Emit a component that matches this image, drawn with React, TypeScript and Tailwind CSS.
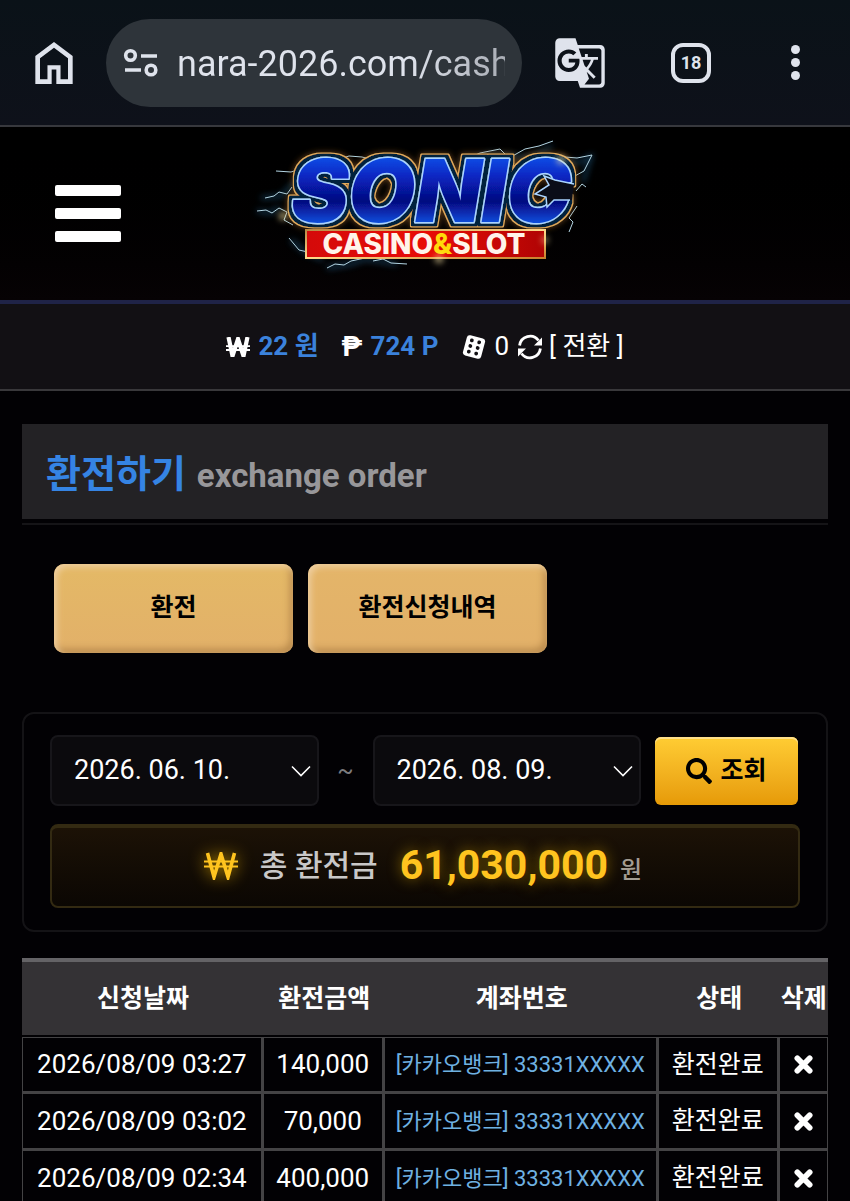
import React from "react";
import { FaSearch } from "react-icons/fa";
import { MdGTranslate } from "react-icons/md";

interface Exchange {
  date: string;
  amount: string;
  account: string;
  status: string;
}

const exchanges: Exchange[] = [
  {
    date: "2026/08/09 03:27",
    amount: "140,000",
    account: "[카카오뱅크] 33331XXXXX",
    status: "환전완료",
  },
  {
    date: "2026/08/09 03:02",
    amount: "70,000",
    account: "[카카오뱅크] 33331XXXXX",
    status: "환전완료",
  },
  {
    date: "2026/08/09 02:34",
    amount: "400,000",
    account: "[카카오뱅크] 33331XXXXX",
    status: "환전완료",
  },
];

const HomeIcon = () => (
  <svg viewBox="0 0 24 24" className="size-14" fill="currentColor">
    <path d="M6 19h3.200v-6h5.600v6h3.200v-9l-6-4.500L6 10v9zm-2 2V9l8-6 8 6v12h-7v-6.200h-2v6.200H4z" />
  </svg>
);

const SiteInfoIcon = () => (
  <svg
    viewBox="0 0 36 30"
    className="h-[30px] w-9 shrink-0"
    fill="none"
    stroke="currentColor"
    strokeWidth="3.6"
  >
    <circle cx="7.5" cy="7.5" r="4.8" />
    <path d="M18 8h16M2 22h16" />
    <circle cx="28" cy="22" r="4.8" />
  </svg>
);

const WonIcon = () => (
  <svg viewBox="0 0 24 20" className="h-5 w-6" fill="none" stroke="#fff">
    <path d="M2.500 0l4 19L12 2l5.500 17 4-19" strokeWidth="4.200" />
    <path d="M0 9.200h24M0 13h24" strokeWidth="1.800" />
  </svg>
);

const DiceIcon = () => (
  <svg viewBox="0 0 24 24" className="size-6" fill="#fff">
    <g transform="rotate(15 12 12)">
      <rect x="2.6" y="1.6" width="18.8" height="20.8" rx="3" />
      <g fill="#121014">
        <circle cx="8.2" cy="6.2" r="1.9" />
        <circle cx="15.8" cy="6.2" r="1.9" />
        <circle cx="8.2" cy="12" r="1.9" />
        <circle cx="15.8" cy="12" r="1.9" />
        <circle cx="8.2" cy="17.8" r="1.9" />
        <circle cx="15.8" cy="17.8" r="1.9" />
      </g>
    </g>
  </svg>
);

const RefreshIcon = () => (
  <svg viewBox="0 0 26 26" className="size-[26px]" fill="none" stroke="#fff">
    <path
      d="M2.600 11.500A10.500 10.500 0 0 1 21.500 6.500M23.400 14.500A10.500 10.500 0 0 1 4.500 19.500"
      strokeWidth="2.800"
    />
    <path d="M25 3.500v8h-8zM1 22.500v-8h8z" fill="#fff" stroke="none" />
  </svg>
);

const CloseIcon = () => (
  <svg viewBox="0 0 20 20" className="size-[19px]" stroke="#fff" strokeWidth="6">
    <path d="M3.500 3.500l13 13M16.500 3.500l-13 13" strokeLinecap="round" />
  </svg>
);

const Logo = () => (
  <svg
    viewBox="0 0 340 132"
    className="h-[132px] w-[340px] overflow-visible"
    role="img"
    aria-label="SONIC CASINO&SLOT"
  >
    <defs>
      <linearGradient id="blue" x1="0" y1="0" x2="0" y2="1">
        <stop offset="0.1" stopColor="#0d5cf5" />
        <stop offset="0.35" stopColor="#0828c4" />
        <stop offset="0.6" stopColor="#050880" />
        <stop offset="0.85" stopColor="#0f5cf0" />
      </linearGradient>
      <linearGradient id="gold" x1="0" y1="0" x2="1" y2="1">
        <stop offset="0" stopColor="#b98a46" />
        <stop offset="0.5" stopColor="#ffd98a" />
        <stop offset="1" stopColor="#c9802c" />
      </linearGradient>
      <linearGradient id="red" x1="0" y1="0" x2="1" y2="0">
        <stop offset="0" stopColor="#d40a0a" />
        <stop offset="0.5" stopColor="#e80c06" />
        <stop offset="1" stopColor="#b00404" />
      </linearGradient>
      <filter id="glow" x="-20%" y="-20%" width="140%" height="140%">
        <feGaussianBlur stdDeviation="3" />
      </filter>
      {/* dark band, gold rim and warm halo around the lettering */}
      <filter id="rim" x="-10%" y="-20%" width="120%" height="140%">
        <feMorphology in="SourceAlpha" operator="dilate" radius="4" result="outer" />
        <feMorphology in="SourceAlpha" operator="dilate" radius="2.5" result="inner" />
        <feGaussianBlur in="outer" stdDeviation="0.5" result="outerSoft" />
        <feGaussianBlur in="inner" stdDeviation="0.4" result="innerSoft" />
        <feGaussianBlur in="outer" stdDeviation="3" result="haloShape" />
        <feFlood floodColor="#a8692a" floodOpacity="0.6" />
        <feComposite in2="haloShape" operator="in" result="halo" />
        <feFlood floodColor="#e0ab5c" />
        <feComposite in2="outerSoft" operator="in" result="rim" />
        <feFlood floodColor="#06203c" />
        <feComposite in2="innerSoft" operator="in" result="band" />
        <feMerge>
          <feMergeNode in="halo" />
          <feMergeNode in="rim" />
          <feMergeNode in="band" />
          <feMergeNode in="SourceGraphic" />
        </feMerge>
      </filter>
    </defs>

    {/* lightning */}
    <g fill="none" stroke="#2b7fb5" strokeWidth="3" opacity="0.55" filter="url(#glow)">
      <path d="M2 63l14 2 8-6M6 50l20-2 14-14" />
      <path d="M36 92l14 12 18 8M72 120l24-4 14-5 32 5" />
      <path d="M205 15l30-9 22 2 18 2 22-12M298 14l28 0 10-6-8 26" />
    </g>
    <g fill="none" stroke="#b4d6e4" strokeWidth="1" strokeLinejoin="round">
      <path d="M2 63l9-1 6 3 7-5 8 4-3 8 9 5M10 50l9-2 5-4 8 2 5-7" />
      <path d="M21 23l15 1 12-4M78 13l16-5 13 1 12 3" />
      <path d="M34 90l10 12 13 3 3 6M72 120l8-4 9 1 7-4 14-3" />
      <path d="M118 113l10-2 8 4 16 1" />
      <path d="M205 14l20-9 20-4 9 9 16-9 14-3 14-5" />
      <path d="M294 12l16-3 12 1 15-3-8 16-11 6M321 43l6-7 4 3M322 58l-8 12 4 4-4 10" />
    </g>

    <text
      x="176"
      y="74"
      fontFamily="Inter, sans-serif"
      fontWeight="900"
      fontStyle="italic"
      fontSize="86"
      textAnchor="middle"
      fill="url(#blue)"
      stroke="#a9d4ff"
      strokeWidth="3"
      strokeLinejoin="round"
      paintOrder="stroke"
      filter="url(#rim)"
    >
      SONIC
    </text>
    {/* quills cut into the mouth of the last letter */}
    <path d="M319 36l-19-4-11-4 5 9-14 9 11 3 1 10 7-7h18z" fill="#0a0d18" />
    <path
      d="M319 36l-19-4-11-4 5 9-14 9 11 3 1 10 7-7h16"
      fill="none"
      stroke="#a9d4ff"
      strokeWidth="1.5"
    />

    <rect x="51" y="82" width="239" height="28" fill="url(#red)" stroke="url(#gold)" strokeWidth="2" />
    <text
      x="169"
      y="106"
      fontFamily="Inter, sans-serif"
      fontWeight="800"
      fontSize="28"
      textAnchor="middle"
      fill="#fff4ea"
    >
      CASINO<tspan fill="#ffd90a">&amp;</tspan>SLOT
    </text>
    <g fill="#ffe9a8" opacity="0.7" filter="url(#glow)">
      <circle cx="306" cy="12" r="4" />
      <circle cx="184" cy="111" r="4" />
      <circle cx="28" cy="68" r="4" />
      <circle cx="290" cy="92" r="3" />
    </g>
  </svg>
);

interface DateSelectProps {
  label: string;
  value: string;
}

const DateSelect = ({ label, value }: DateSelectProps) => (
  <div className="relative flex-1">
    <select
      aria-label={label}
      className="h-[71px] w-full appearance-none rounded-lg border-2 border-[#17161a] bg-[#0b0a0d] px-[22px] text-[27px] text-white"
    >
      <option>{value}</option>
    </select>
    <svg
      viewBox="0 0 20 12"
      className="pointer-events-none absolute top-[30px] right-2 h-3 w-5"
      fill="none"
      stroke="#fff"
      strokeWidth="1.6"
    >
      <path d="M1 1.500l9 9 9-9" />
    </svg>
  </div>
);

const BrowserBar = () => (
  <div className="flex h-[127px] items-center border-b-2 border-[#37383d] bg-linear-to-b from-[#0a1218] to-[#0e111a] pl-[26px] text-[#dfe3ec]">
    <button aria-label="홈">
      <HomeIcon />
    </button>
    <div className="ml-6 flex h-[88px] min-w-0 flex-1 items-center gap-[18px] rounded-full bg-[#2e343a] px-[17px]">
      <SiteInfoIcon />
      <input
        aria-label="주소"
        defaultValue="nara-2026.com/cash"
        className="h-14 w-full min-w-0 bg-linear-to-r from-[#dfe3ec] from-70% to-[#a9adb5] bg-clip-text pt-0.5 text-4xl text-transparent outline-none"
      />
    </div>
    <div className="ml-[31px] flex w-[297px] items-center">
      <button aria-label="번역">
        <MdGTranslate className="size-[54px]" />
      </button>
      <button className="ml-16 size-10 rounded-xl border-4 border-[#dfe3ec] text-lg leading-none font-bold">
        18
      </button>
      <button aria-label="메뉴" className="ml-20 flex flex-col gap-1">
        <span className="size-[9px] rounded-full bg-[#dfe3ec]" />
        <span className="size-[9px] rounded-full bg-[#dfe3ec]" />
        <span className="size-[9px] rounded-full bg-[#dfe3ec]" />
      </button>
    </div>
  </div>
);

const Header = () => (
  <header className="grid h-[177px] grid-cols-[1fr_auto_1fr] items-center border-b-4 border-[#1f2347] bg-linear-to-b from-black to-[#060204]">
    <button aria-label="메뉴 열기" className="ml-[55px] flex w-[66px] flex-col gap-3">
      <span className="h-[11px] w-full rounded-xs bg-white" />
      <span className="h-[11px] w-full rounded-xs bg-white" />
      <span className="h-[11px] w-full rounded-xs bg-white" />
    </button>
    <Logo />
  </header>
);

const Wallet = () => (
  <div className="flex h-[87px] items-center justify-center border-b-2 border-[#39383b] bg-[#121014] text-[26px]">
    <WonIcon />
    <span className="ml-2 font-bold text-[#3b82dc]">22 원</span>
    <span className="ml-[23px] text-[28px] font-bold">₱</span>
    <span className="ml-2 font-bold text-[#3b82dc]">724 P</span>
    <span className="ml-6">
      <DiceIcon />
    </span>
    <span className="mx-2">0</span>
    <RefreshIcon />
    <button className="ml-1.5">[ 전환 ]</button>
  </div>
);

const App = () => {
  return (
    <div className="h-screen overflow-hidden bg-[#020104] font-['Roboto','Noto_Sans_CJK_KR',sans-serif] text-white">
      <BrowserBar />
      <Header />
      <Wallet />
      <main className="px-[22px] pt-[33px]">
        <div className="border-b-2 border-[#151417] pb-1">
          <h1 className="flex h-[95px] items-baseline gap-[11px] bg-[#232225] px-6 pt-6 text-[38px] leading-[52px] font-bold text-[#3584e4]">
            환전하기
            <span className="text-[33px] text-[#98979a]">exchange order</span>
          </h1>
        </div>

        <div className="mt-[39px] ml-8 flex gap-[15px] text-[25px] font-bold text-black">
          <button className="h-[89px] w-[239px] rounded-[10px] bg-linear-to-b from-[#e4b966] to-[#e2b069] pb-0.5 shadow-[inset_3px_3px_6px_#efcfa0,inset_-3px_-4px_7px_#b98a4c]">
            환전
          </button>
          <button className="h-[89px] w-[239px] rounded-[10px] bg-linear-to-b from-[#e4b569] to-[#e2b069] pb-0.5 shadow-[inset_3px_3px_6px_#efcfa0,inset_-3px_-4px_7px_#b98a4c]">
            환전신청내역
          </button>
        </div>

        <section className="mt-[59px] rounded-xl border-2 border-[#141316] px-[26px] pt-[21px] pb-[22px]">
          <div className="flex items-center pr-0.5">
            <DateSelect label="시작일" value="2026. 06. 10." />
            <span className="w-[54px] text-center text-2xl text-[#7c7b7e]">~</span>
            <DateSelect label="종료일" value="2026. 08. 09." />
            <button className="ml-[14px] flex h-[68px] w-[143px] items-center justify-center gap-2 rounded-md bg-linear-to-b from-[#ffcd33] to-[#e69a06] text-[25px] font-bold text-black shadow-[inset_0_2px_0_#ffe08a]">
              <FaSearch className="size-[26px]" />
              조회
            </button>
          </div>
          <div className="mt-[18px] flex h-[84px] items-center justify-center rounded-lg border-2 border-t-4 border-[#332a12] bg-linear-to-b from-[#1c1206] to-[#0b0703] pr-1 pb-0.5">
            <svg
              viewBox="0 0 34 28"
              className="h-7 w-[34px] drop-shadow-[0_0_8px_#b88a00]"
              fill="none"
              stroke="#ffc41f"
            >
              <path d="M3.500 1l6.500 24L17 2l7 23L30.500 1" strokeWidth="3.600" />
              <path d="M0 9.500h34M0 14.500h34" strokeWidth="2" />
            </svg>
            <span className="ml-[22px] text-3xl font-medium text-[#c9c8c8]">총 환전금</span>
            <strong className="ml-[22px] text-[41px] font-bold text-[#ffc41f] [text-shadow:0_0_14px_#8a6800]">
              61,030,000
            </strong>
            <span className="ml-3 pt-2 text-2xl font-medium text-[#a39c92]">원</span>
          </div>
        </section>

        <table className="mt-[26px] w-full table-fixed border-separate border-spacing-0 text-center whitespace-nowrap">
          <thead>
            <tr className="text-[25px] [&>th]:h-[77px] [&>th]:border-t-4 [&>th]:border-[#646366] [&>th]:bg-[#343235] [&>th]:p-0">
              <th className="w-[30%]">신청날짜</th>
              <th className="w-[15%]">환전금액</th>
              <th className="w-[34%]">계좌번호</th>
              <th className="w-[15%]">상태</th>
              <th className="w-[6%]">삭제</th>
            </tr>
          </thead>
          <tbody className="before:block before:h-[2px] [&_td]:h-[57px] [&_td]:border-r-[3px] [&_td]:border-b-[3px] [&_td]:border-[#444345] [&_td]:p-0 [&_td:first-child]:border-l [&_td:last-child]:border-r [&_tr:first-child>td]:border-t">
            {exchanges.map((item) => (
              <tr key={item.date} className="text-[26px]">
                <td>{item.date}</td>
                <td>{item.amount}</td>
                <td className="text-[22px] text-[#6fb1e2]">{item.account}</td>
                <td className="text-[25px]">{item.status}</td>
                <td>
                  <button aria-label="삭제" className="mx-auto block">
                    <CloseIcon />
                  </button>
                </td>
              </tr>
            ))}
          </tbody>
        </table>
      </main>
    </div>
  );
};

export default App;
